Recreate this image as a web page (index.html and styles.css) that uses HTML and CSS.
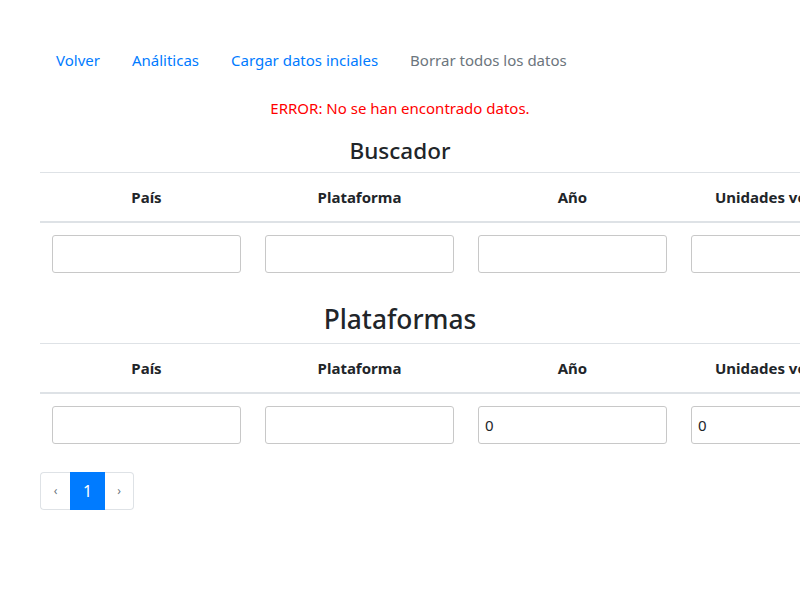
FILE: index.html
```html
<!DOCTYPE html>
<html lang="es">
<head>
<meta charset="utf-8">
<title>Plataformas</title>
<link rel="stylesheet" href="styles.css">
</head>
<body>
<div class="page">
  <ul class="nav">
    <li><a class="nav-link" href="#">Volver</a></li>
    <li><a class="nav-link" href="#">Análiticas</a></li>
    <li><a class="nav-link" href="#">Cargar datos inciales</a></li>
    <li><a class="nav-link disabled" href="#">Borrar todos los datos</a></li>
  </ul>
  <p class="error">ERROR: No se han encontrado datos.</p>

  <h4 class="title-sm">Buscador</h4>
  <table class="grid">
    <thead>
      <tr><th>País</th><th>Plataforma</th><th>Año</th><th>Unidades vendidas</th><th></th></tr>
    </thead>
    <tbody>
      <tr>
        <td><input class="field" type="text"></td>
        <td><input class="field" type="text"></td>
        <td><input class="field" type="text"></td>
        <td><input class="field" type="text"></td>
        <td></td>
      </tr>
    </tbody>
  </table>

  <h3 class="title-md">Plataformas</h3>
  <table class="grid">
    <thead>
      <tr><th>País</th><th>Plataforma</th><th>Año</th><th>Unidades vendidas</th><th></th></tr>
    </thead>
    <tbody>
      <tr>
        <td><input class="field" type="text"></td>
        <td><input class="field" type="text"></td>
        <td><input class="field" type="text" value="0"></td>
        <td><input class="field" type="text" value="0"></td>
        <td></td>
      </tr>
    </tbody>
  </table>

  <ul class="pager">
    <li><a class="pager-link arrow" href="#">‹</a></li>
    <li><a class="pager-link active" href="#">1</a></li>
    <li><a class="pager-link arrow" href="#">›</a></li>
  </ul>
</div>
</body>
</html>
```
FILE: styles.css
```css
html, body {
  margin: 0;
  overflow: hidden;
}
body {
  font-family: "Noto Sans", "Open Sans", "Liberation Sans", sans-serif;
  font-size: 15px;
  line-height: 24px;
  color: #212529;
  background: #fff;
}
.page {
  width: 720px;
  padding: 40px;
}
.nav {
  display: flex;
  list-style: none;
  margin: 0;
  padding: 0;
}
.nav-link {
  display: block;
  padding: 8px 16px;
  color: #007bff;
  text-decoration: none;
}
.nav-link.disabled {
  color: #6c757d;
}
.error {
  color: #ff0000;
  text-align: center;
  margin: 16px 0;
}
.title-sm, .title-md {
  text-align: center;
  font-weight: 500;
  margin: 0 0 8px;
}
.title-sm {
  font-size: 22.5px;
  line-height: 28px;
  position: relative;
  top: 1px;
}
.title-md {
  font-size: 26.3px;
  line-height: 34px;
  position: relative;
  top: 1px;
}
.grid {
  width: 1065px;
  table-layout: fixed;
  border-collapse: collapse;
  margin-bottom: 16px;
}
.grid th {
  padding: 12px;
  text-align: center;
  font-weight: 700;
  border-top: 1px solid #dee2e6;
  border-bottom: 2px solid #dee2e6;
  white-space: nowrap;
  overflow: hidden;
}
.grid td {
  padding: 12px;
  border-top: 1px solid #dee2e6;
}
.field {
  display: block;
  box-sizing: border-box;
  width: 100%;
  height: 38px;
  padding: 0 6px;
  font: inherit;
  color: #212529;
  border: 1px solid #c8c8c8;
  border-radius: 3px;
  background: #fff;
}
.pager {
  display: flex;
  list-style: none;
  margin: 0;
  padding: 0;
}
.pager-link {
  display: block;
  height: 38px;
  box-sizing: border-box;
  line-height: 36px;
  border: 1px solid #dee2e6;
  text-decoration: none;
  text-align: center;
}
.pager-link.arrow {
  width: 30px;
  font-size: 12px;
  color: #6c757d;
}
.pager li:first-child .pager-link {
  border-radius: 4px 0 0 4px;
  border-right: 0;
}
.pager li:last-child .pager-link {
  width: 29px;
  border-radius: 0 4px 4px 0;
  border-left: 0;
}
.pager-link.active {
  width: 35px;
  background: #007bff;
  border-color: #007bff;
  color: #fff;
  font-size: 16px;
}
```
